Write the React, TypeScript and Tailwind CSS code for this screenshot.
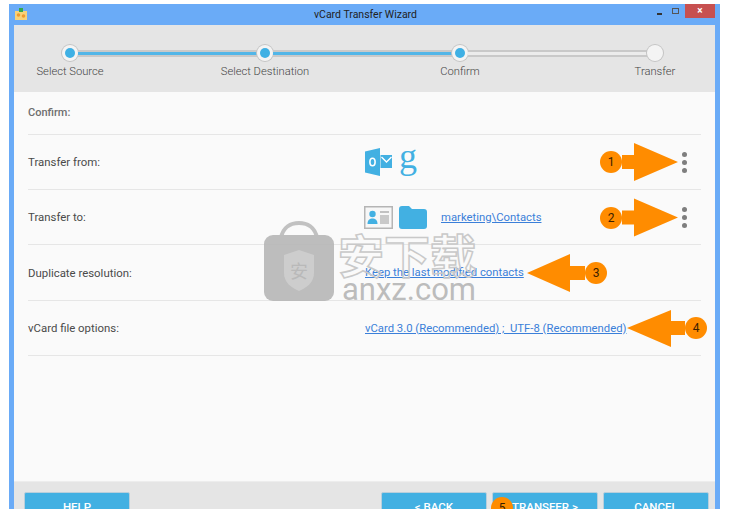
const steps = [
  { label: 'Select Source', done: true },
  { label: 'Select Destination', done: true },
  { label: 'Confirm', done: true },
  { label: 'Transfer', done: false },
];

function Step({ label, done }: { label: string; done: boolean }) {
  return (
    <div className="flex w-[16px] flex-col items-center">
      <div className="flex h-[16px] w-[16px] shrink-0 items-center justify-center rounded-full bg-[#f4f4f4] shadow-[0_0_0_1px_#c4c4c4]">
        {done && <div className="h-[10px] w-[10px] rounded-full bg-[#3fb0e4]" />}
      </div>
      <span className="mt-[1px] whitespace-nowrap text-[11.2px] leading-[20px] font-light text-[#444]">{label}</span>
    </div>
  );
}

function Track({ active }: { active: boolean }) {
  return (
    <div className="mt-[5px] flex h-[7px] flex-1 items-center border-y-2 border-[#c9c9c9] bg-[#ececec]">
      {active && <div className="h-[3px] w-full bg-[#52b6e8]" />}
    </div>
  );
}

function Row({ label, height, children }: { label: string; height: string; children?: React.ReactNode }) {
  return (
    <div className={`mx-[14px] flex items-center border-b border-[#e6e6e6] ${height}`}>
      <span className="mt-[2px] w-[336px] shrink-0 text-[11.4px] text-[#4a4a4a]">{label}</span>
      {children}
    </div>
  );
}

function Link({ children, className }: { children: React.ReactNode; className?: string }) {
  return <span className={`mt-[2px] text-[11.3px] text-[#3b7fd9] underline ${className ?? ''}`}>{children}</span>;
}

function Dots() {
  return (
    <div className="ml-auto mr-[14px] flex flex-col gap-[3px]">
      <span className="h-[5px] w-[5px] rounded-full bg-[#7e7e7e]" />
      <span className="h-[5px] w-[5px] rounded-full bg-[#7e7e7e]" />
      <span className="h-[5px] w-[5px] rounded-full bg-[#7e7e7e]" />
    </div>
  );
}

function FooterButton({ children, className }: { children: React.ReactNode; className?: string }) {
  return (
    <button className={`flex h-[32px] w-[106px] shrink-0 items-center justify-center rounded-[2px] border border-[#b9cfdc] bg-[#42b0e2] text-[11.5px] font-medium text-white ${className ?? ''}`}>
      {children}
    </button>
  );
}

function Badge({ n, className }: { n: number; className: string }) {
  return (
    <div className={`absolute flex h-[22px] w-[22px] items-center justify-center rounded-full bg-[#ff8c00] text-[12px] text-[#3a2000] ${className}`}>
      {n}
    </div>
  );
}

function OutlookIcon() {
  return (
    <svg width="29" height="28" viewBox="0 0 29 28">
      <rect x="16.500" y="7" width="11.500" height="13" fill="#42b0e2" />
      <path d="M17.500 9l5 5 5-5" fill="none" stroke="#fff" strokeWidth="1.4" />
      <path d="M1 3.500L16 0v28L1 24.500z" fill="#42b0e2" />
      <ellipse cx="8.500" cy="14" rx="2.600" ry="3.800" fill="none" stroke="#fff" strokeWidth="1.600" />
    </svg>
  );
}

function CardIcon() {
  return (
    <svg width="29" height="23" viewBox="0 0 29 23">
      <rect x="0.750" y="0.750" width="27.500" height="21.500" fill="#f7f7f7" stroke="#b5b5b5" strokeWidth="1.500" />
      <circle cx="8.500" cy="8" r="3.200" fill="#42b0e2" />
      <path d="M3.500 18c0-4 2.200-5.500 5-5.500s5 1.500 5 5.500z" fill="#42b0e2" />
      <path d="M16 6h9" stroke="#a9a9a9" strokeWidth="1.400" />
      <rect x="16" y="9" width="9" height="9" fill="#c9c9c9" />
    </svg>
  );
}

function FolderIcon() {
  return (
    <svg width="28" height="23" viewBox="0 0 28 23">
      <path d="M3 0h7l3 3h12a3 3 0 0 1 3 3v14a3 3 0 0 1-3 3H3a3 3 0 0 1-3-3V3a3 3 0 0 1 3-3z" fill="#42b0e2" />
    </svg>
  );
}

function AppIcon() {
  return (
    <svg width="12" height="12" viewBox="0 0 12 12">
      <rect x="0" y="3" width="12" height="9" fill="#f6d27a" />
      <rect x="4" y="0" width="4" height="4" fill="#35a84a" />
      <circle cx="3.500" cy="7" r="1.800" fill="#ee9a2e" />
      <circle cx="8.500" cy="8" r="1.800" fill="#ee9a2e" />
    </svg>
  );
}

function Watermark() {
  return (
    <div className="absolute left-[264px] top-[221px] flex items-start gap-[4px]">
      <svg width="70" height="80" viewBox="0 0 70 80" opacity="0.92">
        <path d="M17 17C19 6 27 2 35 2s16 4 18 15" fill="none" stroke="#bdbdbd" strokeWidth="4" />
        <rect x="0" y="14" width="70" height="66" rx="9" fill="#b8b8b8" />
        <path d="M35 29l15 5v18c0 10-8 15-15 18-7-3-15-8-15-18V34z" fill="#cacaca" />
        <text x="35" y="57" textAnchor="middle" fontSize="18" fill="#b4b4b4" fontFamily="'Noto Sans CJK SC', sans-serif">安</text>
      </svg>
      <div className="flex flex-col">
        <span className="mt-[8px] whitespace-nowrap font-['Noto_Sans_CJK_SC',sans-serif] text-[46px] leading-[48px] font-bold text-transparent [-webkit-text-stroke:1.5px_#c9c9c9]">安下载</span>
        <span className="mt-[-3px] pl-[4px] text-[31px] leading-[32px] text-[#bcbcbc]">anxz.com</span>
      </div>
    </div>
  );
}

export default function App() {
  return (
    <div className="relative h-[526px] w-[745px] overflow-hidden bg-white font-['Roboto',sans-serif]">
      <div className="ml-[9px] mt-[4px] flex h-[505px] w-[711px] flex-col overflow-hidden bg-[#6aabf7]">
        {/* Title bar */}
        <div className="relative flex h-[21px] shrink-0 items-center justify-center text-[10.500px] text-[#222]">
          <span className="absolute left-[6px] top-[4px]"><AppIcon /></span>
          <span className="ml-[2px]">vCard Transfer Wizard</span>
          <div className="absolute right-[5px] top-0 flex items-start">
            <span className="mr-[10px] mt-[9px] h-[2px] w-[5px] bg-[#333]" />
            <span className="mr-[6px] mt-[4px] h-[6px] w-[7px] border border-[#555]" />
            <span className="flex h-[14px] w-[30px] items-center justify-center bg-[#c75050] text-[10px] font-bold leading-none text-white">×</span>
          </div>
        </div>

        <div className="mx-[5px] flex min-h-0 flex-1 flex-col bg-[#fafafa]">
          {/* Stepper */}
          <div className="flex h-[67px] shrink-0 items-start bg-[#e5e5e5] pl-[48px] pr-[52px] pt-[20px]">
            <Step {...steps[0]} />
            <Track active />
            <Step {...steps[1]} />
            <Track active />
            <Step {...steps[2]} />
            <Track active={false} />
            <Step {...steps[3]} />
          </div>

          {/* Rows */}
          <div className="flex-1">
            <div className="mx-[14px] flex h-[43px] items-center border-b border-[#e6e6e6] pt-[1px] text-[11px] font-medium text-[#6e6e6e]">Confirm:</div>
            <Row label="Transfer from:" height="h-[55px]">
              <OutlookIcon />
              <span className="-mt-[13px] ml-[6px] font-['Liberation_Serif',serif] text-[36px] leading-[28px] text-[#42b0e2]">g</span>
              <Dots />
            </Row>
            <Row label="Transfer to:" height="h-[55px]">
              <CardIcon />
              <span className="ml-[6px]"><FolderIcon /></span>
              <Link className="ml-[14px]">marketing\Contacts</Link>
              <Dots />
            </Row>
            <Row label="Duplicate resolution:" height="h-[56px]">
              <Link className="ml-px">Keep the last modified contacts</Link>
            </Row>
            <Row label="vCard file options:" height="h-[55px]">
              <Link className="ml-px">vCard 3.0 (Recommended) ;&nbsp; UTF-8 (Recommended)</Link>
            </Row>
          </div>

          {/* Footer */}
          <div className="flex h-[28px] shrink-0 items-start border-t border-[#ededed] bg-[#e5e5e5] pl-[10px] pr-[6px] pt-[10px]">
            <FooterButton>HELP</FooterButton>
            <FooterButton className="ml-auto">&lt; BACK</FooterButton>
            <FooterButton className="ml-[5px]">TRANSFER &gt;</FooterButton>
            <FooterButton className="ml-[5px]">CANCEL</FooterButton>
          </div>
        </div>
      </div>

      <Watermark />

      {/* Callouts */}
      <svg className="absolute left-0 top-0" width="745" height="526" viewBox="0 0 745 526">
        <g fill="#ff8c00">
          <path d="M622 155h12v-12l44 19-44 19v-12h-12z" />
          <path d="M622 210.500h12v-12l44 19-44 19v-12h-12z" />
          <path d="M585 266h-15v-12l-43 19 43 19v-12h15z" />
          <path d="M685 321h-14v-11l-44 18 44 19v-12h14z" />
        </g>
      </svg>
      <Badge n={1} className="left-[600px] top-[151px]" />
      <Badge n={2} className="left-[600px] top-[207px]" />
      <Badge n={3} className="left-[585px] top-[262px]" />
      <Badge n={4} className="left-[685px] top-[317px]" />
      {/* the 5 badge is cut off by the window's lower edge */}
      <div className="absolute left-[491px] top-[497px] h-[12px] w-[22px] overflow-hidden">
        <div className="flex h-[22px] w-[22px] items-center justify-center rounded-full bg-[#ff8c00] text-[12px] text-[#3a2000]">5</div>
      </div>
    </div>
  );
}
